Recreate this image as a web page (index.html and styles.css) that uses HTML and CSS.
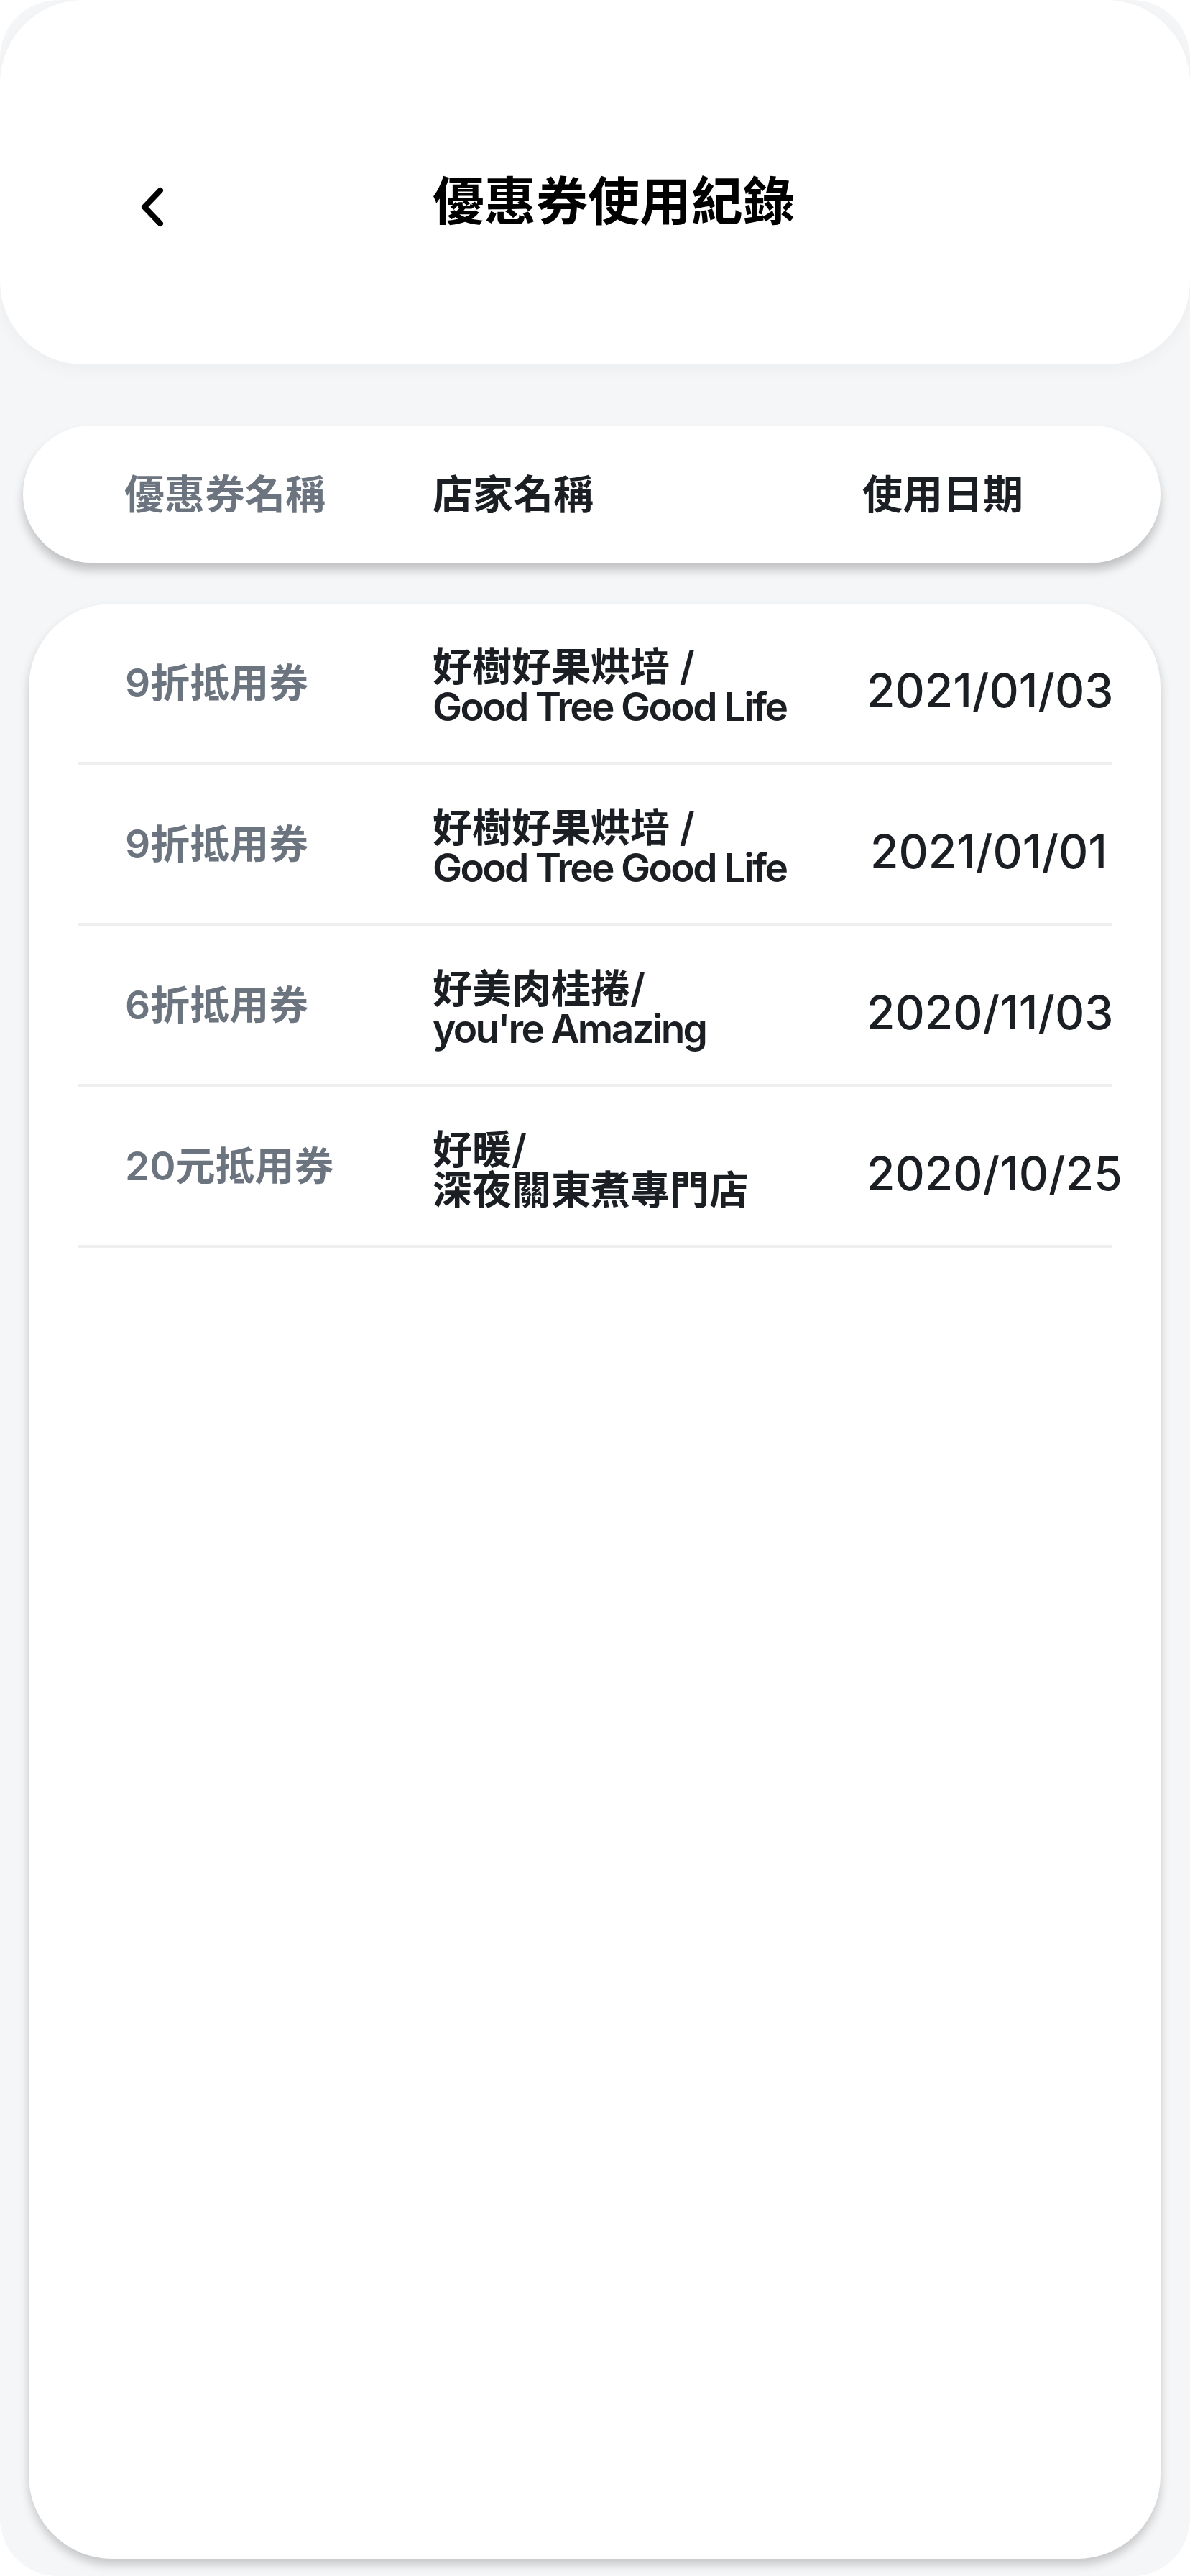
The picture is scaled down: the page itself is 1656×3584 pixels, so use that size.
FILE: index.html
```html
<!DOCTYPE html>
<html lang="zh-Hant">
<head>
<meta charset="utf-8">
<title>優惠券使用紀錄</title>
<link rel="stylesheet" href="styles.css">
</head>
<body>
<div class="screen">
  <header class="topbar">
    <div class="nav">
      <svg class="back" width="40" height="60" viewBox="0 0 40 60" aria-hidden="true">
        <path d="M33 7 L11 30 L33 53" fill="none" stroke="#000" stroke-width="8" stroke-linecap="round" stroke-linejoin="round"/>
      </svg>
      <h1 class="title">優惠券使用紀錄</h1>
    </div>
  </header>

  <div class="thead">
    <div class="th th-coupon">優惠券名稱</div>
    <div class="th th-store">店家名稱</div>
    <div class="th th-date">使用日期</div>
  </div>

  <main class="list">
    <div class="row">
      <div class="coupon">9折抵用券</div>
      <div class="store"><span class="zh">好樹好果烘培 /</span><span class="en">Good Tree Good Life</span></div>
      <div class="date">2021/01/03</div>
    </div>
    <div class="row">
      <div class="coupon">9折抵用券</div>
      <div class="store"><span class="zh">好樹好果烘培 /</span><span class="en">Good Tree Good Life</span></div>
      <div class="date">2021/01/01</div>
    </div>
    <div class="row">
      <div class="coupon">6折抵用券</div>
      <div class="store"><span class="zh">好美肉桂捲/</span><span class="en">you're Amazing</span></div>
      <div class="date">2020/11/03</div>
    </div>
    <div class="row">
      <div class="coupon">20元抵用券</div>
      <div class="store"><span class="zh">好暖/</span><span class="zh">深夜關東煮專門店</span></div>
      <div class="date">2020/10/25</div>
    </div>
  </main>
</div>
</body>
</html>
```

FILE: styles.css
```css
* { box-sizing: border-box; }

html, body {
  margin: 0;
  padding: 0;
  background: #ffffff;
}

body {
  font-family: Inter, "Noto Sans CJK TC", "Noto Sans", sans-serif;
  color: #1b1f24;
}

.screen {
  width: 1656px;
  height: 3584px;
  background: #f5f6f8;
  border-radius: 80px;
  overflow: hidden;
  display: flex;
  flex-direction: column;
}

.topbar {
  height: 507px;
  flex: none;
  background: #ffffff;
  border-radius: 116px;
  box-shadow: 0 6px 24px rgba(0, 0, 0, 0.04);
}

.nav {
  display: flex;
  align-items: flex-start;
  padding: 240px 0 0 190px;
}

.back {
  display: block;
  margin-top: 18px;
  flex: none;
}

.title {
  margin: 0 0 0 372px;
  font-size: 72px;
  line-height: 80px;
  font-weight: 700;
  color: #000000;
}

.thead {
  flex: none;
  height: 191px;
  margin: 85px 41px 0 32px;
  background: #ffffff;
  border-radius: 96px;
  box-shadow: 0 10px 14px rgba(0, 0, 0, 0.22);
  display: grid;
  grid-template-columns: 429px 598px 1fr;
  align-items: center;
  padding-left: 141px;
}

.th {
  font-size: 56px;
  line-height: 64px;
  font-weight: 700;
  color: #1b1f24;
}

.th-coupon { color: #6c757f; }

.list {
  flex: none;
  height: 2720px;
  margin: 57px 41px 0 40px;
  background: #ffffff;
  border-radius: 116px;
  box-shadow: 0 8px 14px rgba(0, 0, 0, 0.2);
}

.row {
  height: 224px;
  margin: 0 67px 0 68px;
  padding-left: 66px;
  border-bottom: 4px solid #eeeff1;
  display: grid;
  grid-template-columns: 428px 604px 340px;
  align-items: center;
}

.coupon {
  font-size: 55px;
  line-height: 64px;
  font-weight: 600;
  color: #6c757f;
}

.store {
  display: flex;
  flex-direction: column;
  padding-top: 10px;
  color: #1b1f24;
}

.zh {
  display: block;
  font-size: 55px;
  line-height: 56px;
  font-weight: 600;
}

.en {
  display: block;
  font-size: 55px;
  line-height: 56px;
  font-weight: 600;
  letter-spacing: -2.7px;
}

.date {
  font-size: 64px;
  line-height: 72px;
  font-weight: 500;
  text-align: center;
  padding-top: 22px;
  color: #1b1f24;
}
```
